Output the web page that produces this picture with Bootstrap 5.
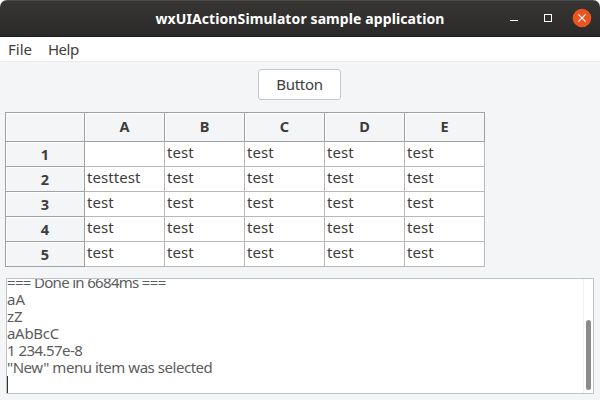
<!DOCTYPE html>
<html lang="en">
<head>
<meta charset="utf-8">
<title>wxUIActionSimulator sample application</title>
<link href="https://cdn.jsdelivr.net/npm/bootstrap@5.3.0/dist/css/bootstrap.min.css" rel="stylesheet">
<style>
html{background:#fff}
body{font:15px/17px "Noto Sans","Open Sans",sans-serif;color:#3d3d3d;background:#fff}
.app-window{width:600px;height:400px;background:#f4f5f7;border-radius:7px 7px 0 0}
.title-bar{height:37px;background:linear-gradient(#373634,#2b2929);border-top:1px solid #4b4a47;border-bottom:1px solid #1d1c1c;color:#fff;font-size:14px;font-weight:700}
.title-bar svg{right:0;top:-1px}
.title-text{letter-spacing:.1px}
.menu-strip{height:25px;background:#fff;border-bottom:1px solid #ebecee;padding-left:8px;gap:16px}
.m-help{letter-spacing:-.5px}
.btn-main{width:83px;height:31px;margin:7px 1px 0 0;font-size:15px;line-height:17px;letter-spacing:-.3px;color:#3d3d3d;background:#fff;border:1px solid #c2c7ce;border-radius:3px}
.sheet{margin:12px 0 0 5px;width:480px;display:grid;grid-template-columns:79px repeat(5,80px);grid-template-rows:29px repeat(5,25px);border:solid #a0a1a2;border-width:1px 0 0 1px}
.cell{background:#fff;border:solid #b9b9b9;border-width:0 1px 1px 0;padding:2px 0 0 2px;white-space:nowrap;color:#3d3d3d;letter-spacing:.05px}
.head{border-color:#a0a1a2;background:#f4f5f7;font-weight:700;font-size:14.5px;text-align:center;box-shadow:inset 1px 1px #fff;padding:5px 0 0}
.row-head{padding-top:4px}
.log-box{margin:11px 6px 0;height:116px;background:#fff;border:1px solid #bfc4cb;color:#5c5c5c}
.log-lines{white-space:pre}
.l1{letter-spacing:-.68px}
.l4{letter-spacing:-.3px}
.l5{letter-spacing:-.55px}
.l6{letter-spacing:-.46px}
.caret{width:1px;height:17px;background:#333}
.track{width:10px;border-left:1px solid #f0f1f2;padding:0 2px 3px}
.thumb{width:5px;height:70px;border-radius:3px;background:#8b8b8b}
</style>
<script src="https://cdn.jsdelivr.net/npm/bootstrap@5.3.0/dist/js/bootstrap.bundle.min.js"></script>
</head>
<body class="m-0 overflow-hidden">
<div class="app-window overflow-hidden">
<header class="title-bar d-flex align-items-center justify-content-center position-relative">
<span class="title-text">wxUIActionSimulator sample application</span>
<svg class="position-absolute" width="100" height="37" viewBox="500 0 100 37"><path d="M510 20.5h8" stroke="#fff"/><rect x="544.5" y="14.5" width="7" height="7" fill="none" stroke="#fff"/><circle cx="582" cy="18" r="9.3" fill="#e95420"/><path d="M578.4 14.4l7.2 7.2M585.6 14.4l-7.2 7.2" stroke="#fff" stroke-width="1.2"/></svg>
</header>
<nav class="menu-strip d-flex align-items-center"><span class="m-file">File</span><span class="m-help">Help</span></nav>
<div class="d-flex justify-content-center"><button class="btn btn-main p-0" type="button">Button</button></div>
<div class="sheet">
<div class="cell head"></div><div class="cell head">A</div><div class="cell head">B</div><div class="cell head">C</div><div class="cell head">D</div><div class="cell head">E</div>
<div class="cell head row-head">1</div><div class="cell"></div><div class="cell">test</div><div class="cell">test</div><div class="cell">test</div><div class="cell">test</div>
<div class="cell head row-head">2</div><div class="cell">testtest</div><div class="cell">test</div><div class="cell">test</div><div class="cell">test</div><div class="cell">test</div>
<div class="cell head row-head">3</div><div class="cell">test</div><div class="cell">test</div><div class="cell">test</div><div class="cell">test</div><div class="cell">test</div>
<div class="cell head row-head">4</div><div class="cell">test</div><div class="cell">test</div><div class="cell">test</div><div class="cell">test</div><div class="cell">test</div>
<div class="cell head row-head">5</div><div class="cell">test</div><div class="cell">test</div><div class="cell">test</div><div class="cell">test</div><div class="cell">test</div>
</div>
<div class="log-box d-flex overflow-hidden">
<div class="log-lines flex-grow-1 d-flex flex-column justify-content-end"><div class="l1">=== Done in 6684ms ===</div><div class="l2">aA</div><div class="l3">zZ</div><div class="l4">aAbBcC</div><div class="l5">1 234.57e-8</div><div class="l6">"New" menu item was selected</div><div class="caret flex-shrink-0"></div></div>
<div class="track d-flex align-items-end"><div class="thumb"></div></div>
</div>
</div>
</body>
</html>
